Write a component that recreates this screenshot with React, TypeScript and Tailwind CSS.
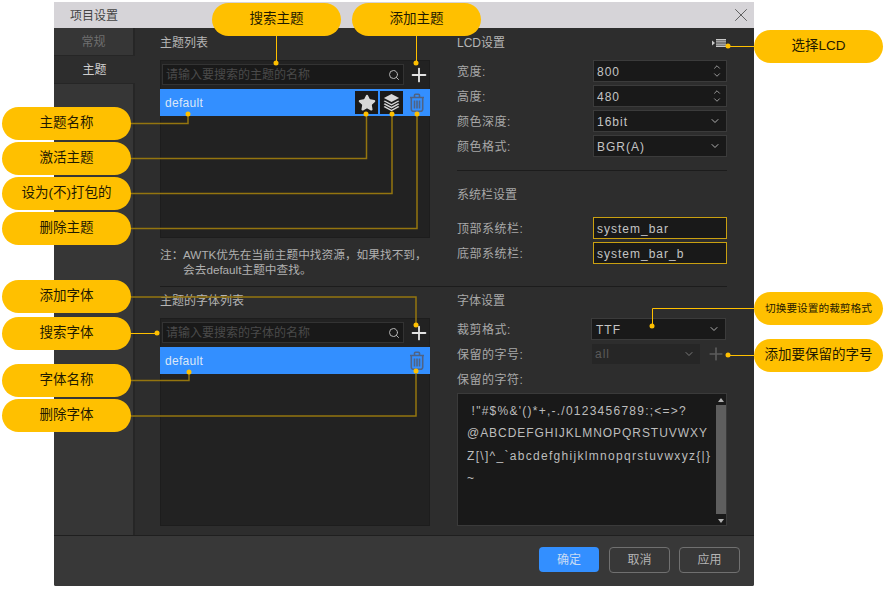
import { ChevronDown, ChevronUp, Plus, Search, Star, X } from "lucide-react"

const font = "font-['Liberation_Sans','Noto_Sans_CJK_SC',sans-serif]"

function Pill({ className, children }: { className: string; children: React.ReactNode }) {
  return (
    <div
      className={`absolute flex h-[33px] w-[129px] items-center justify-center rounded-[17px] bg-[#ffc000] text-[#1f1a00] ${className}`}
    >
      {children}
    </div>
  )
}

function LayersIcon() {
  return (
    <svg viewBox="0 0 20 20" className="size-[19px]" fill="#d8d8d8">
      <path d="M10 1 18 5.200l-8 4.200L2 5.200z" />
      <path d="M3 7.800 10 11.500l7-3.700 1.300 1L10 13.200 1.700 8.800z" />
      <path d="M3 10.800 10 14.500l7-3.700 1.300 1L10 16.200 1.700 11.800z" />
      <path d="M3 13.800 10 17.500l7-3.700 1.300 1L10 19.200 1.700 14.800z" />
    </svg>
  )
}

function TrashIcon() {
  return (
    <svg viewBox="0 0 16 19" className="h-[19px] w-[16px]" fill="none" stroke="#4f6385" strokeWidth="1.600">
      <path d="M1 4.500h14M5.500 4V2.200a1 1 0 0 1 1-1h3a1 1 0 0 1 1 1V4" />
      <path d="M2.300 4.500v11.800a2 2 0 0 0 2 2h7.400a2 2 0 0 0 2-2V4.500" />
      <path d="M5.500 7.500v8M8 7.500v8M10.500 7.500v8" />
    </svg>
  )
}

function SearchRow({ placeholder }: { placeholder: string }) {
  return (
    <div className="ml-[1px] mt-[3px] flex h-[21px] items-center">
      <div className="flex h-[21px] w-[242px] shrink-0 items-center justify-between border border-[#333333] bg-[#191919] pl-[3px] pr-[3px]">
        <span className="text-[12px] text-[#4a4a4a]">{placeholder}</span>
        <Search className="size-[12px] text-[#b5b5b5]" strokeWidth={2} />
      </div>
      <Plus className="ml-[4px] size-[22px] shrink-0 text-[#e4e4e4]" strokeWidth={2} />
    </div>
  )
}

function ItemRow({ children }: { children?: React.ReactNode }) {
  return (
    <div className="-mx-px mt-[4px] flex h-[27px] items-center justify-between bg-[#338fff] pl-[5px] pr-[5px]">
      <span className="text-[12px] tracking-[0.3px] text-[#dbe7f7]">default</span>
      <div className="flex items-center gap-[2px]">
        {children}
        <div className="ml-[4px]">
          <TrashIcon />
        </div>
      </div>
    </div>
  )
}

function SpinField({ value }: { value: string }) {
  return (
    <div className="flex h-[22px] w-[134px] items-center justify-between border border-[#3b3b3b] bg-[#191919] pl-[3px] pr-[4px]">
      <span className="pt-px text-[12px] tracking-[1px] text-[#c4c4c4]">{value}</span>
      <div className="flex flex-col text-[#b0b0b0]">
        <ChevronUp className="-mb-[2px] size-[10px]" strokeWidth={2} />
        <ChevronDown className="size-[10px]" strokeWidth={2} />
      </div>
    </div>
  )
}

function SelectField({ value }: { value: string }) {
  return (
    <div className="flex h-[22px] w-[134px] items-center justify-between border border-[#3b3b3b] bg-[#191919] pl-[3px] pr-[5px]">
      <span className="pt-px text-[12px] tracking-[1px] text-[#c4c4c4]">{value}</span>
      <ChevronDown className="size-[12px] text-[#b0b0b0]" strokeWidth={2} />
    </div>
  )
}

function TextField({ value }: { value: string }) {
  return (
    <div className="flex h-[22px] w-[134px] items-center border border-[#c9a011] bg-[#191919] pl-[3px]">
      <span className="pt-px text-[12px] tracking-[1px] text-[#c4c4c4]">{value}</span>
    </div>
  )
}

function FieldRow({ label, children }: { label: string; children: React.ReactNode }) {
  return (
    <div className="flex items-center justify-between">
      <span className="pt-[1px] text-[12px] tracking-[0.5px] text-[#a8a8a8]">{label}</span>
      {children}
    </div>
  )
}

function Connectors() {
  const dull = "#94750f"
  const bright = "#ffc000"
  const dots = [
    [276, 63], [416, 63], [728, 46], [188, 114], [366, 114], [392, 114], [417, 114],
    [416, 325], [157, 333], [189, 372], [416, 371], [652, 326], [728, 355],
  ]
  return (
    <svg className="absolute left-0 top-0 size-full" viewBox="0 0 885 591" fill="none">
      <path d="M276.500 35V63M416.500 35V63M728 46.500H754M157 333.500H131M728 355.500H754M652.500 326V308.500H754" stroke={bright} strokeWidth="1" />
      <path d="M131 123.500H188V114M131 158.500H366.500V114M131 193.500H392V114M131 228.500H417V114M131 297H416V325M131 380.500H189V372M131 416H416V371" stroke={dull} strokeWidth="1.500" />
      {dots.map(([x, y]) => (
        <circle key={`${x}-${y}`} cx={x} cy={y} r="2.500" fill={bright} />
      ))}
    </svg>
  )
}

export default function App() {
  return (
    <div className={`relative h-[591px] w-[885px] overflow-hidden bg-white ${font}`}>
      <div className="ml-[54px] mt-[2px] flex h-[584px] w-[700px] flex-col overflow-hidden rounded-b-[2px] bg-[#2d2d2d]">
        {/* title bar */}
        <div className="flex h-[26px] items-center justify-between bg-[#d6d4d8] pl-[16px] pr-[2px]">
          <span className="pt-[1px] text-[12px] text-[#444444]">项目设置</span>
          <X className="size-[22px] text-[#555555]" strokeWidth={1} />
        </div>

        <div className="flex h-[507px]">
          {/* tabs */}
          <div className="flex w-[81px] shrink-0 flex-col bg-[#2d2d2d]">
            <div className="flex h-[28px] items-center justify-center border-b border-r-2 border-[#262626] bg-[#363636] text-[12px] text-[#6f6f6f]">
              常规
            </div>
            <div className="flex h-[27px] items-center justify-center pt-[1px] text-[12px] text-[#cfcfcf]">
              主题
            </div>
            <div className="flex-1 border-r-2 border-t border-[#262626] bg-[#363636]" />
          </div>

          <div className="flex-1 pl-[25px] pr-[27px]">
            {/* theme + lcd */}
            <div className="flex h-[259px] justify-between border-b border-[#1c1c1c]">
              <div className="w-[270px]">
                <div className="mt-[7px] h-[16px] text-[12px] leading-[16px] text-[#b5b5b5]">主题列表</div>
                <div className="mt-[9px] h-[178px] border border-[#1d1d1d] bg-[#222222]">
                  <SearchRow placeholder="请输入要搜索的主题的名称" />
                  <ItemRow>
                    <div className="flex size-[23px] items-center justify-center bg-[#1a1a1a]">
                      <Star className="size-[18px] fill-[#d8d8d8] text-[#d8d8d8]" strokeWidth={2} />
                    </div>
                    <div className="flex size-[23px] items-center justify-center bg-[#1a1a1a]">
                      <LayersIcon />
                    </div>
                  </ItemRow>
                </div>
                <div className="mt-[9px] flex whitespace-nowrap text-[11.700px] leading-[15px] text-[#b0b0b0]">
                  <span className="w-[23px] shrink-0">注：</span>
                  <span>
                    AWTK优先在当前主题中找资源，如果找不到，
                    <br />
                    会去default主题中查找。
                  </span>
                </div>
              </div>

              <div className="w-[270px]">
                <div className="mt-[7px] flex h-[16px] items-center justify-between">
                  <span className="text-[12px] text-[#b5b5b5]">LCD设置</span>
                  <svg viewBox="0 0 14 8" className="mr-[1px] h-[8px] w-[14px]" fill="#c8c8c8">
                    <path d="M0 1.500 3 4 0 6.500z" />
                    <path d="M4 0h10v1.400H4zM4 2.200h10v1.400H4zM4 4.400h10v1.400H4zM4 6.600h10V8H4z" />
                  </svg>
                </div>
                <div className="mt-[9px] flex flex-col gap-[3px]">
                  <FieldRow label="宽度:"><SpinField value="800" /></FieldRow>
                  <FieldRow label="高度:"><SpinField value="480" /></FieldRow>
                  <FieldRow label="颜色深度:"><SelectField value="16bit" /></FieldRow>
                  <FieldRow label="颜色格式:"><SelectField value="BGR(A)" /></FieldRow>
                </div>
                <div className="mt-[13px] h-px bg-[#1c1c1c]" />
                <div className="mt-[16px] h-[16px] text-[12px] leading-[16px] text-[#a8a8a8]">系统栏设置</div>
                <div className="mt-[14px] flex flex-col gap-[3px]">
                  <FieldRow label="顶部系统栏:"><TextField value="system_bar" /></FieldRow>
                  <FieldRow label="底部系统栏:"><TextField value="system_bar_b" /></FieldRow>
                </div>
              </div>
            </div>

            {/* fonts */}
            <div className="flex justify-between">
              <div className="w-[270px]">
                <div className="mt-[6px] h-[16px] text-[12px] leading-[16px] text-[#b5b5b5]">主题的字体列表</div>
                <div className="mt-[9px] h-[208px] border border-[#1d1d1d] bg-[#222222]">
                  <SearchRow placeholder="请输入要搜索的字体的名称" />
                  <ItemRow />
                </div>
              </div>

              <div className="w-[270px]">
                <div className="mt-[6px] h-[16px] text-[12px] leading-[16px] text-[#a8a8a8]">字体设置</div>
                <div className="mt-[9px] flex items-center justify-between pr-[1px]">
                  <span className="pt-[1px] text-[12px] tracking-[0.5px] text-[#a8a8a8]">裁剪格式:</span>
                  <div className="flex h-[22px] w-[135px] items-center justify-between border border-[#3b3b3b] bg-[#191919] pl-[4px] pr-[5px]">
                    <span className="pt-px text-[12px] tracking-[1px] text-[#c4c4c4]">TTF</span>
                    <ChevronDown className="size-[12px] text-[#b0b0b0]" strokeWidth={2} />
                  </div>
                </div>
                <div className="mt-[4px] flex items-center">
                  <span className="w-[135px] pt-[1px] text-[12px] tracking-[0.5px] text-[#a8a8a8]">保留的字号:</span>
                  <div className="flex h-[20px] w-[108px] items-center justify-between bg-[#262626] pl-[3px] pr-[5px]">
                    <span className="text-[12px] tracking-[1px] text-[#5a5a5a]">all</span>
                    <ChevronDown className="size-[12px] text-[#7a7a7a]" strokeWidth={2} />
                  </div>
                  <Plus className="ml-[6px] size-[20px] text-[#5c5c5c]" strokeWidth={2} />
                </div>
                <div className="mt-[8px] h-[16px] text-[12px] leading-[16px] tracking-[0.5px] text-[#a8a8a8]">保留的字符:</div>
                <div className="mt-[5px] flex h-[133px] border border-[#3a3a3a] bg-[#191919]">
                  <div className="flex-1 overflow-hidden whitespace-pre pl-[9px] pt-[6px] text-[12px] leading-[22.300px] text-[#bdbdbd]">
                    <div className="tracking-[1.250px]">{" !\"#$%&'()*+,-./0123456789:;<=>?"}</div>
                    <div className="tracking-[0.950px]">@ABCDEFGHIJKLMNOPQRSTUVWXY</div>
                    <div className="tracking-[1.300px]">{"Z[\\]^_`abcdefghijklmnopqrstuvwxyz{|}"}</div>
                    <div>~</div>
                  </div>
                  <div className="flex w-[10px] shrink-0 flex-col items-center">
                    <div className="mt-[4px] h-0 w-0 border-x-[3px] border-b-[4px] border-x-transparent border-b-[#b0b0b0]" />
                    <div className="mt-[3px] h-[109px] w-full bg-[#5e5e5e]" />
                    <div className="mt-[5px] h-0 w-0 border-x-[3px] border-t-[4px] border-x-transparent border-t-[#b0b0b0]" />
                  </div>
                </div>
              </div>
            </div>
          </div>
        </div>

        {/* footer */}
        <div className="flex flex-1 items-center justify-end gap-[9px] border-t border-[#1f1f1f] bg-[#383838] pb-[3px] pr-[14px]">
          <button className="mr-[1px] h-[25px] w-[60px] rounded-[4px] bg-[#338fff] text-[12px] text-[#c8dcf5]">确定</button>
          <button className="h-[26px] w-[61px] rounded-[4px] border border-[#707070] text-[12px] text-[#b5b5b5]">取消</button>
          <button className="h-[26px] w-[61px] rounded-[4px] border border-[#707070] text-[12px] text-[#b5b5b5]">应用</button>
        </div>
      </div>

      <Connectors />

      <Pill className="left-[212px] top-[3px] text-[13.500px]">搜索主题</Pill>
      <Pill className="left-[352px] top-[3px] text-[13.500px]">添加主题</Pill>
      <Pill className="left-[754px] top-[30px] text-[13.500px]">选择LCD</Pill>
      <Pill className="left-[2px] top-[107px] text-[13.500px]">主题名称</Pill>
      <Pill className="left-[2px] top-[142px] text-[13.500px]">激活主题</Pill>
      <Pill className="left-[2px] top-[177px] text-[13.500px]">设为(不)打包的</Pill>
      <Pill className="left-[2px] top-[212px] text-[13.500px]">删除主题</Pill>
      <Pill className="left-[2px] top-[280px] text-[13.500px]">添加字体</Pill>
      <Pill className="left-[2px] top-[317px] text-[13.500px]">搜索字体</Pill>
      <Pill className="left-[2px] top-[364px] text-[13.500px]">字体名称</Pill>
      <Pill className="left-[2px] top-[399px] text-[13.500px]">删除字体</Pill>
      <Pill className="left-[754px] top-[292px] text-[10.700px]">切换要设置的裁剪格式</Pill>
      <Pill className="left-[754px] top-[339px] text-[13.500px]">添加要保留的字号</Pill>
    </div>
  )
}
